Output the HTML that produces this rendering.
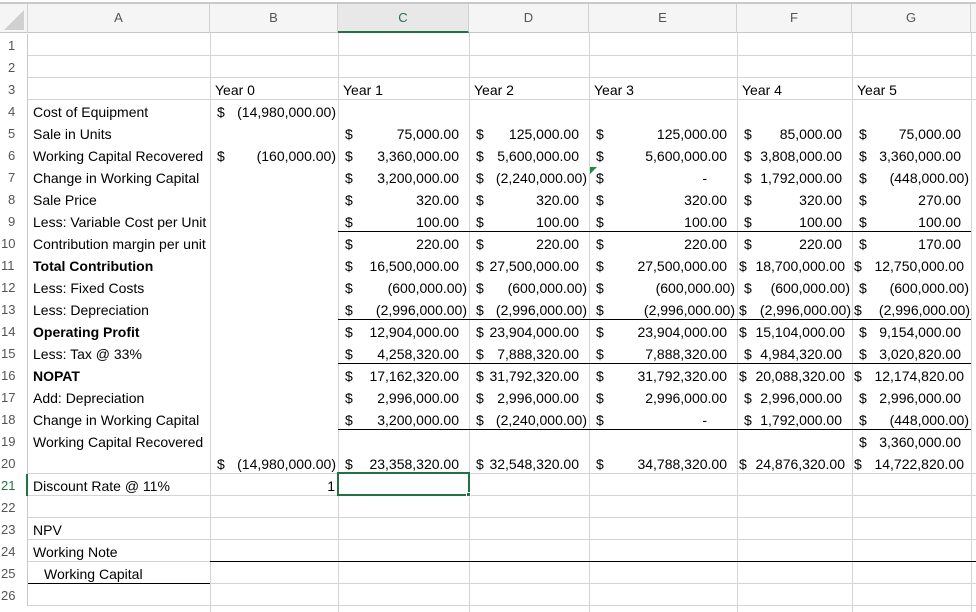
<!DOCTYPE html>
<html><head><meta charset="utf-8"><style>
*{margin:0;padding:0;box-sizing:border-box}
body{width:976px;height:612px;overflow:hidden;background:#fff;font-family:"Liberation Sans",Arial,sans-serif;font-size:14px;color:#000;position:relative}
.top{position:absolute;left:0;top:0;width:976px;height:4px;background:#fff;border-bottom:2px solid #c8c8c8}
.ch{position:absolute;top:4px;height:29px;background:#f5f5f5;border-right:1px solid #d0d0d0;border-bottom:1px solid #c8c8c8;text-align:center;line-height:28px;color:#555;font-size:13px}
.rh{position:absolute;left:0;width:28px;height:22px;line-height:23px;padding-left:8px;color:#555;border-right:1px solid #c8c8c8;background:#fff;font-size:13px}
.vl{position:absolute;top:33px;height:579px;width:1px;background:#d4d4d4}
.hl{position:absolute;left:28px;width:948px;height:1px;background:#d4d4d4}
.bl{position:absolute;height:1px;background:#000}
.c{position:absolute;height:22px;line-height:24px;white-space:nowrap}
.a{display:flex;justify-content:space-between;padding:0 2px 0 7px}
.p{padding-right:8px}
.t{padding-left:5px}
b{font-weight:bold}
</style></head><body>
<div class="top"></div>
<div class="ch" style="left:0;width:28px;background:#f5f5f5"><svg width="28" height="28" style="position:absolute;left:0;top:0"><polygon points="24,6 24,26 4,26" fill="#d0d0d0"/></svg></div>
<div class="ch" style="left:28px;width:182px">A</div>
<div class="ch" style="left:210px;width:128px">B</div>
<div class="ch" style="left:338px;width:131px;color:#217346;background:#e8e8e8;border-bottom:2px solid #217346">C</div>
<div class="ch" style="left:469px;width:120px">D</div>
<div class="ch" style="left:589px;width:148px">E</div>
<div class="ch" style="left:737px;width:115px">F</div>
<div class="ch" style="left:852px;width:119px">G</div>
<div class="ch" style="left:971px;width:5px;border-right:none"></div>

<div class="vl" style="left:210px"></div><div class="vl" style="left:338px"></div><div class="vl" style="left:469px"></div><div class="vl" style="left:589px"></div><div class="vl" style="left:737px"></div><div class="vl" style="left:852px"></div><div class="vl" style="left:971px"></div>

<div class="hl" style="top:55px"></div><div class="hl" style="top:77px"></div><div class="hl" style="top:99px"></div>
<div class="hl" style="top:473px"></div><div class="hl" style="top:495px"></div><div class="hl" style="top:517px"></div><div class="hl" style="top:539px"></div><div class="hl" style="top:561px"></div><div class="hl" style="top:583px"></div><div class="hl" style="top:605px"></div>

<div class="rh" style="top:34px">1</div><div class="rh" style="top:56px">2</div><div class="rh" style="top:78px">3</div><div class="rh" style="top:100px">4</div><div class="rh" style="top:122px">5</div><div class="rh" style="top:144px">6</div><div class="rh" style="top:166px">7</div><div class="rh" style="top:188px">8</div><div class="rh" style="top:210px">9</div><div class="rh" style="top:232px;padding-left:1px">10</div><div class="rh" style="top:254px;padding-left:1px">11</div><div class="rh" style="top:276px;padding-left:1px">12</div><div class="rh" style="top:298px;padding-left:1px">13</div><div class="rh" style="top:320px;padding-left:1px">14</div><div class="rh" style="top:342px;padding-left:1px">15</div><div class="rh" style="top:364px;padding-left:1px">16</div><div class="rh" style="top:386px;padding-left:1px">17</div><div class="rh" style="top:408px;padding-left:1px">18</div><div class="rh" style="top:430px;padding-left:1px">19</div><div class="rh" style="top:452px;padding-left:1px">20</div><div class="rh" style="top:474px;padding-left:1px;color:#217346;border-right:2px solid #217346">21</div><div class="rh" style="top:496px;padding-left:1px">22</div><div class="rh" style="top:518px;padding-left:1px">23</div><div class="rh" style="top:540px;padding-left:1px">24</div><div class="rh" style="top:562px;padding-left:1px">25</div><div class="rh" style="top:584px;padding-left:1px">26</div>

<div class="bl" style="left:338px;width:633px;top:231px"></div>
<div class="bl" style="left:338px;width:633px;top:319px"></div>
<div class="bl" style="left:338px;width:633px;top:363px"></div>
<div class="bl" style="left:338px;width:633px;top:429px"></div>
<div class="bl" style="left:210px;width:766px;top:561px"></div>
<div class="bl" style="left:28px;width:182px;top:583px"></div>

<div class="c t" style="left:210px;top:78px">Year 0</div>
<div class="c t" style="left:338px;top:78px">Year 1</div>
<div class="c t" style="left:469px;top:78px">Year 2</div>
<div class="c t" style="left:589px;top:78px">Year 3</div>
<div class="c t" style="left:737px;top:78px">Year 4</div>
<div class="c t" style="left:852px;top:78px">Year 5</div>

<div class="c t" style="left:28px;top:100px">Cost of Equipment</div>
<div class="c t" style="left:28px;top:122px">Sale in Units</div>
<div class="c t" style="left:28px;top:144px">Working Capital Recovered</div>
<div class="c t" style="left:28px;top:166px">Change in Working Capital</div>
<div class="c t" style="left:28px;top:188px">Sale Price</div>
<div class="c t" style="left:28px;top:210px">Less: Variable Cost per Unit</div>
<div class="c t" style="left:28px;top:232px">Contribution margin per unit</div>
<div class="c t" style="left:28px;top:254px"><b>Total Contribution</b></div>
<div class="c t" style="left:28px;top:276px">Less: Fixed Costs</div>
<div class="c t" style="left:28px;top:298px">Less: Depreciation</div>
<div class="c t" style="left:28px;top:320px"><b>Operating Profit</b></div>
<div class="c t" style="left:28px;top:342px">Less: Tax @ 33%</div>
<div class="c t" style="left:28px;top:364px"><b>NOPAT</b></div>
<div class="c t" style="left:28px;top:386px">Add: Depreciation</div>
<div class="c t" style="left:28px;top:408px">Change in Working Capital</div>
<div class="c t" style="left:28px;top:430px">Working Capital Recovered</div>
<div class="c t" style="left:28px;top:474px">Discount Rate @ 11%</div>
<div class="c t" style="left:28px;top:518px">NPV</div>
<div class="c t" style="left:28px;top:540px">Working Note</div>
<div class="c t" style="left:28px;top:562px;padding-left:16px">Working Capital</div>

<div class="c a" style="left:210px;width:128px;top:100px"><span>$</span><span>(14,980,000.00)</span></div>
<div class="c a" style="left:210px;width:128px;top:144px"><span>$</span><span>(160,000.00)</span></div>
<div class="c a" style="left:210px;width:128px;top:452px"><span>$</span><span>(14,980,000.00)</span></div>
<div class="c" style="left:210px;width:128px;top:474px;text-align:right;padding-right:3px">1</div>

<div class="c a" style="left:338px;width:131px;top:122px"><span>$</span><span class="p">75,000.00</span></div>
<div class="c a" style="left:338px;width:131px;top:144px"><span>$</span><span class="p">3,360,000.00</span></div>
<div class="c a" style="left:338px;width:131px;top:166px"><span>$</span><span class="p">3,200,000.00</span></div>
<div class="c a" style="left:338px;width:131px;top:188px"><span>$</span><span class="p">320.00</span></div>
<div class="c a" style="left:338px;width:131px;top:210px"><span>$</span><span class="p">100.00</span></div>
<div class="c a" style="left:338px;width:131px;top:232px"><span>$</span><span class="p">220.00</span></div>
<div class="c a" style="left:338px;width:131px;top:254px"><span>$</span><span class="p">16,500,000.00</span></div>
<div class="c a" style="left:338px;width:131px;top:276px"><span>$</span><span>(600,000.00)</span></div>
<div class="c a" style="left:338px;width:131px;top:298px"><span>$</span><span>(2,996,000.00)</span></div>
<div class="c a" style="left:338px;width:131px;top:320px"><span>$</span><span class="p">12,904,000.00</span></div>
<div class="c a" style="left:338px;width:131px;top:342px"><span>$</span><span class="p">4,258,320.00</span></div>
<div class="c a" style="left:338px;width:131px;top:364px"><span>$</span><span class="p">17,162,320.00</span></div>
<div class="c a" style="left:338px;width:131px;top:386px"><span>$</span><span class="p">2,996,000.00</span></div>
<div class="c a" style="left:338px;width:131px;top:408px"><span>$</span><span class="p">3,200,000.00</span></div>
<div class="c a" style="left:338px;width:131px;top:452px"><span>$</span><span class="p">23,358,320.00</span></div>

<div class="c a" style="left:469px;width:120px;top:122px"><span>$</span><span class="p">125,000.00</span></div>
<div class="c a" style="left:469px;width:120px;top:144px"><span>$</span><span class="p">5,600,000.00</span></div>
<div class="c a" style="left:469px;width:120px;top:166px"><span>$</span><span>(2,240,000.00)</span></div>
<div class="c a" style="left:469px;width:120px;top:188px"><span>$</span><span class="p">320.00</span></div>
<div class="c a" style="left:469px;width:120px;top:210px"><span>$</span><span class="p">100.00</span></div>
<div class="c a" style="left:469px;width:120px;top:232px"><span>$</span><span class="p">220.00</span></div>
<div class="c a" style="left:469px;width:120px;top:254px"><span>$</span><span class="p">27,500,000.00</span></div>
<div class="c a" style="left:469px;width:120px;top:276px"><span>$</span><span>(600,000.00)</span></div>
<div class="c a" style="left:469px;width:120px;top:298px"><span>$</span><span>(2,996,000.00)</span></div>
<div class="c a" style="left:469px;width:120px;top:320px"><span>$</span><span class="p">23,904,000.00</span></div>
<div class="c a" style="left:469px;width:120px;top:342px"><span>$</span><span class="p">7,888,320.00</span></div>
<div class="c a" style="left:469px;width:120px;top:364px"><span>$</span><span class="p">31,792,320.00</span></div>
<div class="c a" style="left:469px;width:120px;top:386px"><span>$</span><span class="p">2,996,000.00</span></div>
<div class="c a" style="left:469px;width:120px;top:408px"><span>$</span><span>(2,240,000.00)</span></div>
<div class="c a" style="left:469px;width:120px;top:452px"><span>$</span><span class="p">32,548,320.00</span></div>

<svg style="position:absolute;left:590px;top:167px" width="8" height="8"><polygon points="0,0 7,0 0,7" fill="#1e8e3e"/></svg>
<div class="c a" style="left:589px;width:148px;top:122px"><span>$</span><span class="p">125,000.00</span></div>
<div class="c a" style="left:589px;width:148px;top:144px"><span>$</span><span class="p">5,600,000.00</span></div>
<div class="c a" style="left:589px;width:148px;top:166px"><span>$</span><span style="padding-right:28px">-</span></div>
<div class="c a" style="left:589px;width:148px;top:188px"><span>$</span><span class="p">320.00</span></div>
<div class="c a" style="left:589px;width:148px;top:210px"><span>$</span><span class="p">100.00</span></div>
<div class="c a" style="left:589px;width:148px;top:232px"><span>$</span><span class="p">220.00</span></div>
<div class="c a" style="left:589px;width:148px;top:254px"><span>$</span><span class="p">27,500,000.00</span></div>
<div class="c a" style="left:589px;width:148px;top:276px"><span>$</span><span>(600,000.00)</span></div>
<div class="c a" style="left:589px;width:148px;top:298px"><span>$</span><span>(2,996,000.00)</span></div>
<div class="c a" style="left:589px;width:148px;top:320px"><span>$</span><span class="p">23,904,000.00</span></div>
<div class="c a" style="left:589px;width:148px;top:342px"><span>$</span><span class="p">7,888,320.00</span></div>
<div class="c a" style="left:589px;width:148px;top:364px"><span>$</span><span class="p">31,792,320.00</span></div>
<div class="c a" style="left:589px;width:148px;top:386px"><span>$</span><span class="p">2,996,000.00</span></div>
<div class="c a" style="left:589px;width:148px;top:408px"><span>$</span><span style="padding-right:28px">-</span></div>
<div class="c a" style="left:589px;width:148px;top:452px"><span>$</span><span class="p">34,788,320.00</span></div>

<div class="c a" style="left:737px;width:115px;top:122px"><span>$</span><span class="p">85,000.00</span></div>
<div class="c a" style="left:737px;width:115px;top:144px"><span>$</span><span class="p">3,808,000.00</span></div>
<div class="c a" style="left:737px;width:115px;top:166px"><span>$</span><span class="p">1,792,000.00</span></div>
<div class="c a" style="left:737px;width:115px;top:188px"><span>$</span><span class="p">320.00</span></div>
<div class="c a" style="left:737px;width:115px;top:210px"><span>$</span><span class="p">100.00</span></div>
<div class="c a" style="left:737px;width:115px;top:232px"><span>$</span><span class="p">220.00</span></div>
<div class="c a" style="left:737px;width:115px;top:254px;padding-left:2px;padding-right:1px"><span>$</span><span style="padding-right:6px">18,700,000.00</span></div>
<div class="c a" style="left:737px;width:115px;top:276px"><span>$</span><span>(600,000.00)</span></div>
<div class="c a" style="left:737px;width:115px;top:298px;padding-left:2px;padding-right:1px"><span>$</span><span>(2,996,000.00)</span></div>
<div class="c a" style="left:737px;width:115px;top:320px;padding-left:2px;padding-right:1px"><span>$</span><span style="padding-right:6px">15,104,000.00</span></div>
<div class="c a" style="left:737px;width:115px;top:342px"><span>$</span><span class="p">4,984,320.00</span></div>
<div class="c a" style="left:737px;width:115px;top:364px;padding-left:2px;padding-right:1px"><span>$</span><span style="padding-right:6px">20,088,320.00</span></div>
<div class="c a" style="left:737px;width:115px;top:386px"><span>$</span><span class="p">2,996,000.00</span></div>
<div class="c a" style="left:737px;width:115px;top:408px"><span>$</span><span class="p">1,792,000.00</span></div>
<div class="c a" style="left:737px;width:115px;top:452px;padding-left:2px;padding-right:1px"><span>$</span><span style="padding-right:6px">24,876,320.00</span></div>

<div class="c a" style="left:852px;width:119px;top:122px"><span>$</span><span class="p">75,000.00</span></div>
<div class="c a" style="left:852px;width:119px;top:144px"><span>$</span><span class="p">3,360,000.00</span></div>
<div class="c a" style="left:852px;width:119px;top:166px"><span>$</span><span>(448,000.00)</span></div>
<div class="c a" style="left:852px;width:119px;top:188px"><span>$</span><span class="p">270.00</span></div>
<div class="c a" style="left:852px;width:119px;top:210px"><span>$</span><span class="p">100.00</span></div>
<div class="c a" style="left:852px;width:119px;top:232px"><span>$</span><span class="p">170.00</span></div>
<div class="c a" style="left:852px;width:119px;top:254px;padding-left:2px;padding-right:1px"><span>$</span><span style="padding-right:6px">12,750,000.00</span></div>
<div class="c a" style="left:852px;width:119px;top:276px"><span>$</span><span>(600,000.00)</span></div>
<div class="c a" style="left:852px;width:119px;top:298px;padding-left:2px;padding-right:1px"><span>$</span><span>(2,996,000.00)</span></div>
<div class="c a" style="left:852px;width:119px;top:320px"><span>$</span><span class="p">9,154,000.00</span></div>
<div class="c a" style="left:852px;width:119px;top:342px"><span>$</span><span class="p">3,020,820.00</span></div>
<div class="c a" style="left:852px;width:119px;top:364px;padding-left:2px;padding-right:1px"><span>$</span><span style="padding-right:6px">12,174,820.00</span></div>
<div class="c a" style="left:852px;width:119px;top:386px"><span>$</span><span class="p">2,996,000.00</span></div>
<div class="c a" style="left:852px;width:119px;top:408px"><span>$</span><span>(448,000.00)</span></div>
<div class="c a" style="left:852px;width:119px;top:430px"><span>$</span><span class="p">3,360,000.00</span></div>
<div class="c a" style="left:852px;width:119px;top:452px;padding-left:2px;padding-right:1px"><span>$</span><span style="padding-right:6px">14,722,820.00</span></div>

<div style="position:absolute;left:337px;top:472px;width:133px;height:24px;border:2px solid #217346"></div>
<div style="position:absolute;left:466px;top:492px;width:5px;height:5px;background:#217346;border:1px solid #fff"></div>
</body></html>
